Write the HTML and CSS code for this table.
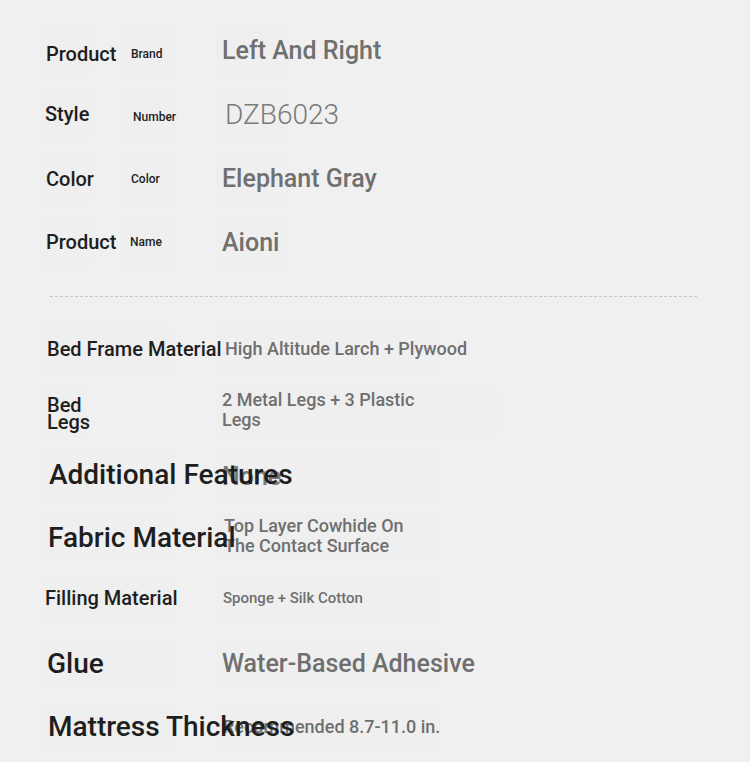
FILE: index.html
```html
<!DOCTYPE html>
<html lang="en">
<head>
<meta charset="utf-8">
<title>Specifications</title>
<link rel="stylesheet" href="styles.css">
</head>
<body>
<main class="sheet">
  <section class="basic">
    <div class="brow">
      <div class="k1"><span class="t1 low4">Product</span></div>
      <div class="k2"><span class="t2 low4">Brand</span></div>
      <div class="v"><span class="tv">Left And Right</span></div>
    </div>
    <div class="brow">
      <div class="k1"><span class="t1 nudge-l">Style</span></div>
      <div class="k2"><span class="t2 nudge-r low">Number</span></div>
      <div class="v"><span class="tv light">DZB6023</span></div>
    </div>
    <div class="brow">
      <div class="k1"><span class="t1 low1">Color</span></div>
      <div class="k2"><span class="t2 low1">Color</span></div>
      <div class="v"><span class="tv">Elephant Gray</span></div>
    </div>
    <div class="brow">
      <div class="k1"><span class="t1">Product</span></div>
      <div class="k2"><span class="t2 nudge-n">Name</span></div>
      <div class="v"><span class="tv">Aioni</span></div>
    </div>
  </section>

  <hr class="divider">

  <section class="details">
    <div class="drow">
      <div class="dk"><span class="lab s20">Bed Frame Material</span></div>
      <div class="dv"><span class="val s18 in3">High Altitude Larch + Plywood</span></div>
    </div>
    <div class="drow">
      <div class="dk narrow"><span class="lab s20 wrap legs">Bed Legs</span></div>
      <div class="dv wide"><span class="val s18 wrap w200 up2">2 Metal Legs + 3 Plastic Legs</span></div>
    </div>
    <div class="drow">
      <div class="dk"><span class="lab s28 in2">Additional Features</span></div>
      <div class="dv"><span class="val s25 soft down2">None</span></div>
    </div>
    <div class="drow">
      <div class="dk"><span class="lab s28 in1">Fabric Material</span></div>
      <div class="dv"><span class="val s18 wrap w190 in2 up2">Top Layer Cowhide On The Contact Surface</span></div>
    </div>
    <div class="drow">
      <div class="dk"><span class="lab s20 left up3">Filling Material</span></div>
      <div class="dv"><span class="val s15 in1 up3">Sponge + Silk Cotton</span></div>
    </div>
    <div class="drow">
      <div class="dk"><span class="lab s28">Glue</span></div>
      <div class="dv"><span class="val s25">Water-Based Adhesive</span></div>
    </div>
    <div class="drow">
      <div class="dk"><span class="lab s28 in1">Mattress Thickness</span></div>
      <div class="dv"><span class="val s18 in1">Recommended 8.7-11.0 in.</span></div>
    </div>
  </section>
</main>
</body>
</html>
```

FILE: styles.css
```css
html, body {
  margin: 0;
  padding: 0;
  background: #f0f0f0;
}

body {
  font-family: Roboto, "Noto Sans", sans-serif;
  color: #1e1e1e;
}

.sheet {
  padding: 18px 0 0 37px;
  width: 660px;
}

/* ---------- basic info ---------- */
.basic {
  display: flex;
  flex-direction: column;
}

.brow {
  display: grid;
  grid-template-columns: 85px 91px 1fr;
  height: 64px;
  align-items: center;
}

.k1, .k2, .v {
  height: 54px;
  display: flex;
  align-items: center;
  background: #eeeeee;
  white-space: nowrap;
  box-sizing: border-box;
  padding-left: 9px;
}

.k1 { width: 55px; }
.k2 { width: 55px; }
.v  { width: 78px; }

.t1 {
  font-size: 20px;
  font-weight: 500;
  color: #1e1e1e;
  position: relative;
  z-index: 1;
}

.t2 {
  font-size: 12px;
  font-weight: 500;
  color: #1e1e1e;
  position: relative;
  z-index: 1;
}

.tv {
  font-size: 25px;
  font-weight: 500;
  color: #707070;
}

.tv.light {
  font-size: 28px;
  font-weight: 300;
  color: #7a7a7a;
  margin-left: 3px;
}

.nudge-l { margin-left: -1px; }
.nudge-r { margin-left: 2px; }
.nudge-n { margin-left: -1px; }
.low { margin-top: 6px; }
.low4 { margin-top: 8px; }
.low1 { margin-top: 2px; }

/* ---------- divider ---------- */
.divider {
  border: 0;
  border-top: 1px dashed #c6c6c6;
  margin: 22px 0 20px 13px;
  width: 647px;
  height: 0;
}

/* ---------- details ---------- */
.details {
  display: flex;
  flex-direction: column;
}

.drow {
  display: grid;
  grid-template-columns: 176px 1fr;
  height: 63px;
  align-items: center;
}

.dk, .dv {
  height: 50px;
  display: flex;
  align-items: center;
  background: #eeeeee;
  white-space: nowrap;
  box-sizing: border-box;
  padding-left: 10px;
}

.k1, .k2, .v, .dk, .dv { background: #efefef; }

.dk { width: 138px; }
.dk.narrow { width: 50px; }
.dv { width: 230px; padding-left: 9px; }
.dv.wide { width: 288px; }

.lab {
  color: #1e1e1e;
  font-weight: 500;
  position: relative;
  z-index: 1;
}

.val {
  color: #6f6f6f;
  font-weight: 500;
}

.val.soft { color: #7a7a7a; }

.wrap { white-space: normal; }
.legs { line-height: 17px; margin-top: 4px; }
.val.wrap { line-height: 20px; }
.w200 { width: 200px; }
.w190 { width: 185px; }

.left { margin-left: -2px; }
.in1 { margin-left: 1px; }
.in2 { margin-left: 2px; }
.in3 { margin-left: 3px; }
.up2 { margin-top: -4px; }
.up3 { margin-top: -6px; }
.down2 { margin-top: 4px; }

.s15 { font-size: 15px; }
.s18 { font-size: 18px; }
.s20 { font-size: 20px; }
.s25 { font-size: 25px; }
.s28 { font-size: 28px; }
```
